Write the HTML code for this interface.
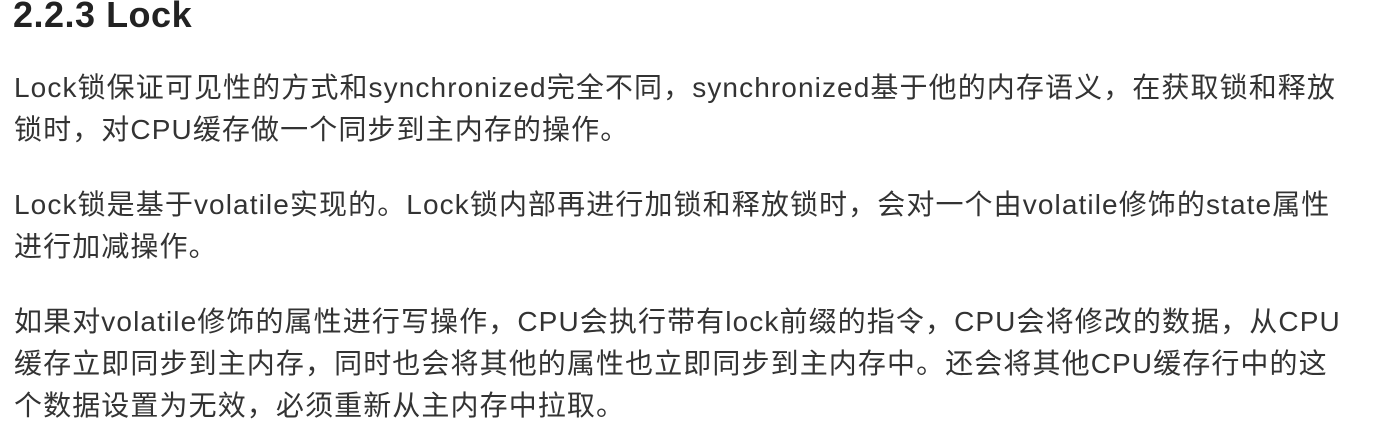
<!DOCTYPE html>
<html><head><meta charset="utf-8"><style>
body{margin:0;width:1390px;height:417px;background:#fff;overflow:hidden;position:relative;font-family:"Liberation Sans","Noto Sans CJK SC",sans-serif;color:#333;}
.l{position:absolute;left:14px;font-size:28px;letter-spacing:1.1px;white-space:nowrap;line-height:42px;}
h1{position:absolute;left:13px;top:-11px;margin:0;font-size:36px;font-weight:bold;color:#222;line-height:52px;letter-spacing:0.5px;}
</style></head><body>
<h1>2.2.3 Lock</h1>
<div class="l" style="top:67px">Lock锁保证可见性的方式和synchronized完全不同，synchronized基于他的内存语义，在获取锁和释放</div>
<div class="l" style="top:109px">锁时，对CPU缓存做一个同步到主内存的操作。</div>
<div class="l" style="top:184px">Lock锁是基于volatile实现的。Lock锁内部再进行加锁和释放锁时，会对一个由volatile修饰的state属性</div>
<div class="l" style="top:226px">进行加减操作。</div>
<div class="l" style="top:301px">如果对volatile修饰的属性进行写操作，CPU会执行带有lock前缀的指令，CPU会将修改的数据，从CPU</div>
<div class="l" style="top:343px">缓存立即同步到主内存，同时也会将其他的属性也立即同步到主内存中。还会将其他CPU缓存行中的这</div>
<div class="l" style="top:385px">个数据设置为无效，必须重新从主内存中拉取。</div>
</body></html>
